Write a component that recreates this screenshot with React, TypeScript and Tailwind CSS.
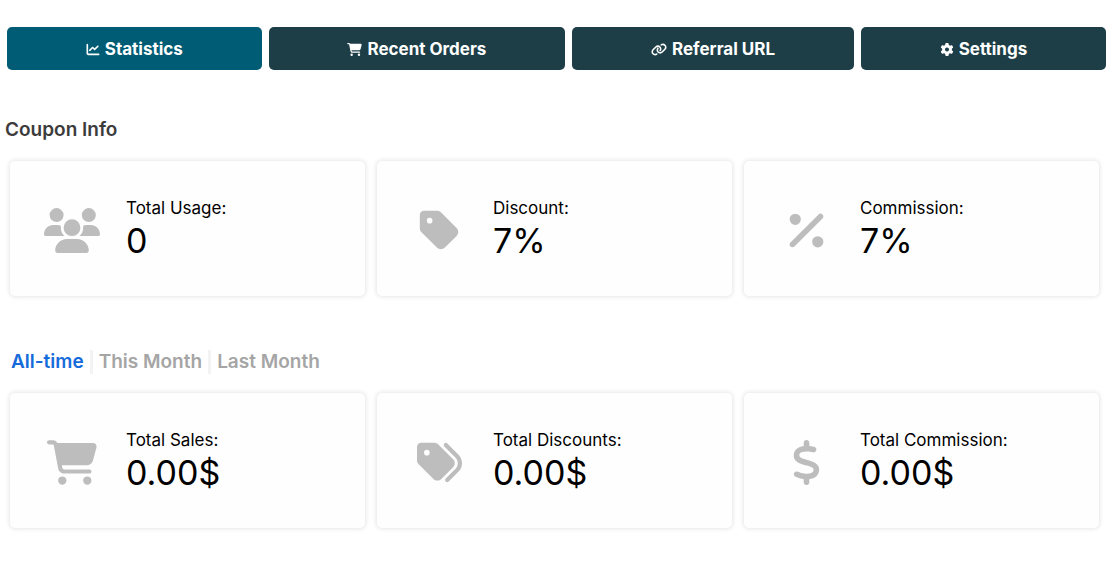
import { useState } from "react"
import type { IconType } from "react-icons"
import {
  FaCartShopping,
  FaChartLine,
  FaDollarSign,
  FaGear,
  FaLink,
  FaPercent,
  FaTag,
  FaTags,
  FaUsers,
} from "react-icons/fa6"

interface Stat {
  label: string
  value: string
  icon: IconType
  iconWidth: string
}

const tabs = [
  { title: "Statistics", icon: FaChartLine, iconWidth: "w-3.5" },
  { title: "Recent Orders", icon: FaCartShopping, iconWidth: "w-[15px]" },
  { title: "Referral URL", icon: FaLink, iconWidth: "w-4" },
  { title: "Settings", icon: FaGear, iconWidth: "w-3.5" },
]

const couponInfo: Stat[] = [
  { label: "Total Usage:", value: "0", icon: FaUsers, iconWidth: "w-14" },
  { label: "Discount:", value: "7%", icon: FaTag, iconWidth: "w-[45px]" },
  { label: "Commission:", value: "7%", icon: FaPercent, iconWidth: "w-[45px]" },
]

const totals: Stat[] = [
  { label: "Total Sales:", value: "0.00$", icon: FaCartShopping, iconWidth: "w-[50px]" },
  { label: "Total Discounts:", value: "0.00$", icon: FaTags, iconWidth: "w-[45px]" },
  { label: "Total Commission:", value: "0.00$", icon: FaDollarSign, iconWidth: "w-[45px]" },
]

const ranges = ["All-time", "This Month", "Last Month"]

const StatCard = ({ label, value, icon: Icon, iconWidth }: Stat) => (
  <div className="flex h-[135px] items-center rounded-[5px] bg-[#fefefe] pl-8 shadow-[0_0_4px_1px_rgba(0,0,0,0.1)]">
    <div className="flex w-15 shrink-0 justify-center pt-1 text-[#bdbdbd]">
      <Icon className={`h-[45px] ${iconWidth}`} />
    </div>
    <dl className="ml-6 text-black">
      <dt className="text-[17px] leading-6">{label}</dt>
      <dd className="text-[34px] leading-[42px]">{value}</dd>
    </dl>
  </div>
)

const StatGrid = ({ stats }: { stats: Stat[] }) => (
  <div className="grid grid-cols-3 gap-3 pr-[9px] pl-[3px]">
    {stats.map((stat) => (
      <StatCard key={stat.label} {...stat} />
    ))}
  </div>
)

export default function App() {
  const [activeTab, setActiveTab] = useState("Statistics")
  const [range, setRange] = useState("All-time")

  return (
    <main className="bg-white px-[7px] pt-[27px] pb-10 font-['Inter',sans-serif]">
      {/* Tabs */}
      <nav className="flex gap-[7px] pr-0.5">
        {tabs.map(({ title, icon: Icon, iconWidth }) => (
          <button
            key={title}
            onClick={() => setActiveTab(title)}
            className={`flex h-[43px] flex-auto items-center justify-center gap-[5px] rounded-[5px] pt-0.5 text-[17px] font-bold text-white ${
              activeTab === title ? "bg-[#005c75]" : "bg-[#1d3e47]"
            }`}
          >
            <Icon className={`h-[13px] ${iconWidth}`} />
            {title}
          </button>
        ))}
      </nav>

      {/* Coupon info */}
      <section className="mt-12">
        <h2 className="-ml-0.5 mb-[19px] text-[19px] leading-6 font-semibold text-[#3c3c3c]">Coupon Info</h2>
        <StatGrid stats={couponInfo} />
      </section>

      {/* Totals for the chosen range */}
      <section className="mt-[54px]">
        <div className="mb-[19px] flex pl-1">
          {ranges.map((item, index) => (
            <button
              key={item}
              onClick={() => setRange(item)}
              className={`text-[19px] leading-6 font-semibold ${index > 0 ? "ml-1.5 border-l-3 border-[#f3f3f3] pl-1.5" : ""} ${
                range === item ? "text-[#166bdb]" : "text-[#a5a5a5]"
              }`}
            >
              {item}
            </button>
          ))}
        </div>
        <StatGrid stats={totals} />
      </section>
    </main>
  )
}
